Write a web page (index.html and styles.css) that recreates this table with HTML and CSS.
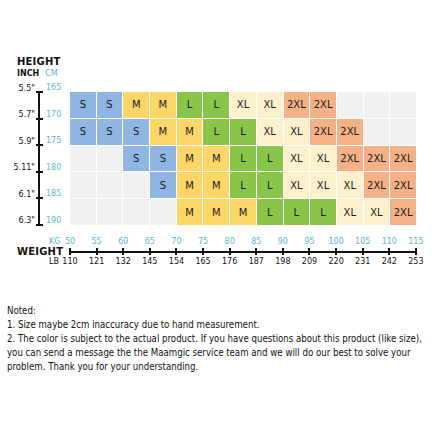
FILE: index.html
```html
<!DOCTYPE html>
<html>
<head>
<meta charset="utf-8">
<link rel="stylesheet" href="styles.css">
</head>
<body>
<div class="page">
  <div class="ytitle">
    <div class="h-title">HEIGHT</div>
    <div class="units"><span class="inch">INCH</span><span class="cm">CM</span></div>
  </div>
  <div class="chart-body">
    <div class="yaxis">
      <div class="ytick"><span class="in">5.5"</span><i></i><span class="cmv">165</span></div>
      <div class="ytick"><span class="in">5.7"</span><i></i><span class="cmv">170</span></div>
      <div class="ytick"><span class="in">5.9"</span><i></i><span class="cmv">175</span></div>
      <div class="ytick"><span class="in">5.11"</span><i></i><span class="cmv">180</span></div>
      <div class="ytick"><span class="in">6.1"</span><i></i><span class="cmv">185</span></div>
      <div class="ytick"><span class="in">6.3"</span><i></i><span class="cmv">190</span></div>
    </div>
    <div class="grid">
      <div class="c s">S</div><div class="c s">S</div><div class="c m">M</div><div class="c m">M</div><div class="c l">L</div><div class="c l">L</div><div class="c xl">XL</div><div class="c xl">XL</div><div class="c xxl">2XL</div><div class="c xxl">2XL</div><div class="c e"></div><div class="c e"></div><div class="c e"></div>
      <div class="c s">S</div><div class="c s">S</div><div class="c s">S</div><div class="c m">M</div><div class="c m">M</div><div class="c l">L</div><div class="c l">L</div><div class="c xl">XL</div><div class="c xl">XL</div><div class="c xxl">2XL</div><div class="c xxl">2XL</div><div class="c e"></div><div class="c e"></div>
      <div class="c e"></div><div class="c e"></div><div class="c s">S</div><div class="c s">S</div><div class="c m">M</div><div class="c m">M</div><div class="c l">L</div><div class="c l">L</div><div class="c xl">XL</div><div class="c xl">XL</div><div class="c xxl">2XL</div><div class="c xxl">2XL</div><div class="c xxl">2XL</div>
      <div class="c e"></div><div class="c e"></div><div class="c e"></div><div class="c s">S</div><div class="c m">M</div><div class="c m">M</div><div class="c l">L</div><div class="c l">L</div><div class="c xl">XL</div><div class="c xl">XL</div><div class="c xl">XL</div><div class="c xxl">2XL</div><div class="c xxl">2XL</div>
      <div class="c e"></div><div class="c e"></div><div class="c e"></div><div class="c e"></div><div class="c m">M</div><div class="c m">M</div><div class="c m">M</div><div class="c l">L</div><div class="c l">L</div><div class="c l">L</div><div class="c xl">XL</div><div class="c xl">XL</div><div class="c xxl">2XL</div>
    </div>
  </div>
  <div class="xaxis">
    <div class="xlabel"><span class="kg">KG</span><span class="weight">WEIGHT</span><span class="lb">LB</span></div>
    <div class="xticks">
      <div class="xt"><span class="kgv">50</span><i></i><span class="lbv">110</span></div>
      <div class="xt"><span class="kgv">55</span><i></i><span class="lbv">121</span></div>
      <div class="xt"><span class="kgv">60</span><i></i><span class="lbv">132</span></div>
      <div class="xt"><span class="kgv">65</span><i></i><span class="lbv">145</span></div>
      <div class="xt"><span class="kgv">70</span><i></i><span class="lbv">154</span></div>
      <div class="xt"><span class="kgv">75</span><i></i><span class="lbv">165</span></div>
      <div class="xt"><span class="kgv">80</span><i></i><span class="lbv">176</span></div>
      <div class="xt"><span class="kgv">85</span><i></i><span class="lbv">187</span></div>
      <div class="xt"><span class="kgv">90</span><i></i><span class="lbv">198</span></div>
      <div class="xt"><span class="kgv">95</span><i></i><span class="lbv">209</span></div>
      <div class="xt"><span class="kgv">100</span><i></i><span class="lbv">220</span></div>
      <div class="xt"><span class="kgv">105</span><i></i><span class="lbv">231</span></div>
      <div class="xt"><span class="kgv">110</span><i></i><span class="lbv">242</span></div>
      <div class="xt"><span class="kgv">115</span><i></i><span class="lbv">253</span></div>
    </div>
  </div>
  <div class="notes">
    <div>Noted:</div>
    <div>1. Size maybe 2cm inaccuracy due to hand measurement.</div>
    <div>2. The color is subject to the actual product. If you have questions about this product (like size),</div>
    <div>you can send a message the the Maamgic service team and we will do our best to solve your</div>
    <div>problem. Thank you for your understanding.</div>
  </div>
</div>
</body>
</html>
```

FILE: styles.css
```css
html, body {
  margin: 0;
  padding: 0;
  background: #ffffff;
}
.page {
  width: 432px;
  height: 432px;
  font-family: "DejaVu Sans", sans-serif;
  color: #111;
  overflow: hidden;
}
.ytitle {
  height: 92px;
  box-sizing: border-box;
  padding: 56px 0 0 17px;
}
.h-title {
  font-weight: bold;
  font-size: 10px;
  line-height: 12px;
  letter-spacing: 0.2px;
}
.units {
  display: flex;
  gap: 6px;
  font-size: 8px;
  line-height: 12px;
}
.inch {
  font-weight: bold;
}
.cm {
  color: #5fb3cf;
}
.chart-body {
  display: flex;
}
.yaxis {
  width: 70px;
  height: 133px;
  display: flex;
  flex-direction: column;
  justify-content: space-between;
  background: linear-gradient(#111, #111) no-repeat 38px -4px / 2px calc(100% + 4px);
}
.ytick {
  height: 0;
  display: flex;
  align-items: center;
  font-size: 8px;
  line-height: 10px;
}
.ytick .in {
  width: 35px;
  text-align: right;
  padding-bottom: 7px;
}
.ytick i {
  width: 7px;
  height: 2px;
  margin-left: 1px;
  background: #111;
}
.ytick .cmv {
  margin-left: 3px;
  color: #5fb3cf;
  padding-bottom: 8px;
}
.grid {
  width: 346px;
  height: 133px;
  display: grid;
  grid-template-columns: repeat(13, 1fr);
  grid-template-rows: repeat(5, 1fr);
  gap: 1px;
  background: #fff;
}
.c {
  display: flex;
  align-items: center;
  justify-content: center;
  font-size: 10px;
  color: #1c1c1c;
}
.s { background: #8fb6e2; }
.m { background: #fdd668; }
.l { background: #88c549; }
.xl { background: #fdf1cd; }
.xxl { background: #f4b185; }
.e { background: #f1f1f1; }
.xaxis {
  display: flex;
  margin-top: 12px;
}
.xlabel {
  width: 70px;
  display: flex;
  flex-direction: column;
  align-items: flex-start;
  font-size: 8px;
  line-height: 10px;
}
.xlabel .kg {
  padding-left: 49px;
  color: #5fb3cf;
}
.xlabel .weight {
  padding-left: 17px;
  font-size: 10px;
  font-weight: bold;
  letter-spacing: 0.2px;
}
.xlabel .lb {
  padding-left: 49px;
}
.xticks {
  width: 346px;
  display: flex;
  justify-content: space-between;
  background: linear-gradient(#111, #111) no-repeat 0 14px / 100% 2px;
}
.xt {
  width: 0;
  display: flex;
  flex-direction: column;
  align-items: center;
  font-size: 8px;
  line-height: 10px;
}
.xt i {
  width: 2px;
  height: 7px;
  margin: 1px 0 2px;
  background: #111;
}
.kgv {
  color: #5fb3cf;
}
.notes {
  margin-top: 37px;
  padding-left: 7px;
  font-family: "DejaVu Sans Condensed", "DejaVu Sans", sans-serif;
  font-size: 9.6px;
  line-height: 14px;
  color: #111;
  white-space: nowrap;
}
```
